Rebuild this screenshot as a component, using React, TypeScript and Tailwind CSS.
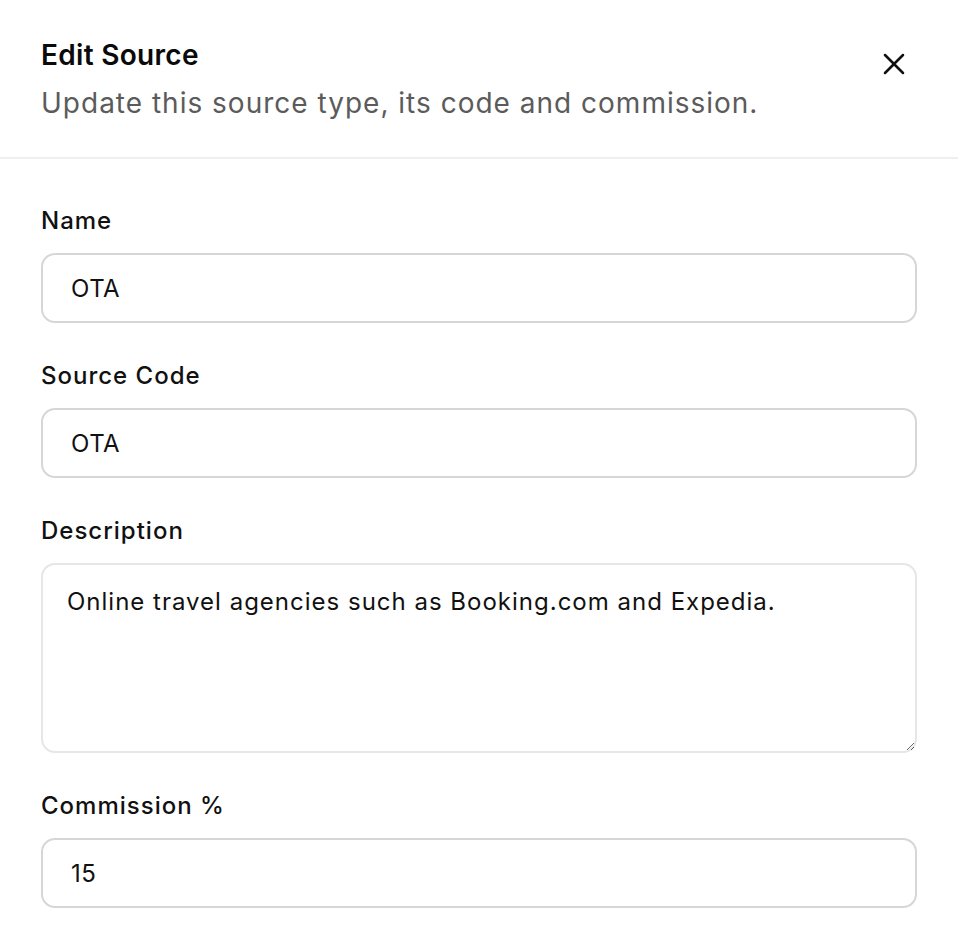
import React from 'react';
import { X } from 'lucide-react';

function Field({ label, value }: { label: string; value: string }) {
  return (
    <div className="flex flex-col gap-[16px]">
      <label className="text-[24px] leading-[32px] font-medium tracking-[1px] text-[#111]">{label}</label>
      <input
        readOnly
        value={value}
        className="h-[70px] w-full rounded-[14px] border-2 border-[#d6d6d6] bg-white px-[28px] text-[24px] tracking-[0.5px] text-[#111] outline-none"
      />
    </div>
  );
}

export default function App() {
  return (
    <div className="min-h-screen w-full bg-white font-['Inter',sans-serif]">
      {/* Header */}
      <div className="flex items-start justify-between border-b-2 border-[#efefef] px-[41px] pt-[37px] pb-[36px]">
        <div className="flex flex-col gap-[12px]">
          <h2 className="text-[28px] leading-[36px] font-semibold tracking-[0.3px] text-[#0a0a0a]">Edit Source</h2>
          <p className="text-[28px] leading-[36px] tracking-[1px] text-[#5b5b5b]">
            Update this source type, its code and commission.
          </p>
        </div>
        <button className="mt-[9px] mr-[5px] text-[#111]">
          <X size={36} strokeWidth={1.7} />
        </button>
      </div>

      {/* Body */}
      <div className="flex flex-col gap-[37px] px-[41px] pt-[46px] pb-[24px]">
        <Field label="Name" value="OTA" />
        <Field label="Source Code" value="OTA" />
        <div className="flex flex-col gap-[16px]">
          <label className="text-[24px] leading-[32px] font-medium tracking-[1px] text-[#111]">Description</label>
          <textarea
            readOnly
            value="Online travel agencies such as Booking.com and Expedia."
            className="h-[190px] w-full rounded-[14px] border-2 border-[#e6e6e6] bg-white px-[24px] py-[20px] text-[24px] leading-[34px] tracking-[1px] text-[#111] outline-none"
          />
        </div>
        <Field label="Commission %" value="15" />
      </div>
    </div>
  );
}
